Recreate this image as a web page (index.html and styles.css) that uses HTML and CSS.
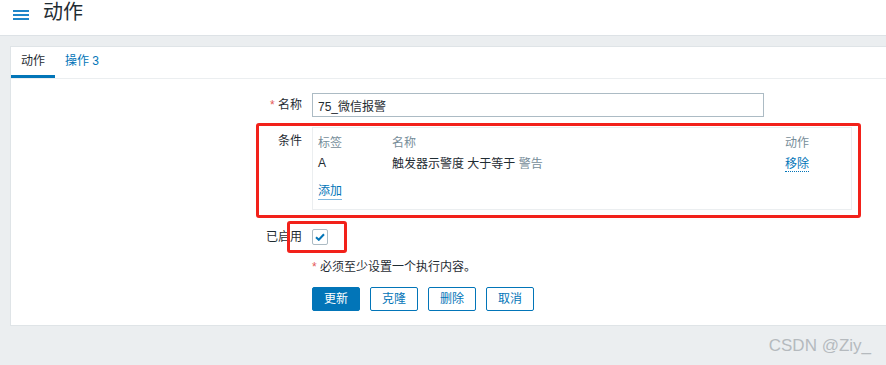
FILE: index.html
```html
<!DOCTYPE html>
<html lang="zh">
<head>
<meta charset="utf-8">
<title>动作</title>
<link rel="stylesheet" href="styles.css">
</head>
<body>
<header class="page-header">
  <svg class="menu-icon" width="16" height="12" viewBox="0 0 16 12"><rect x="0" y="1" width="16" height="2" fill="#1f86c9"/><rect x="0" y="5" width="16" height="2" fill="#1f86c9"/><rect x="0" y="9" width="16" height="2" fill="#1f86c9"/></svg>
  <h1 class="title">动作</h1>
</header>

<main class="panel">
  <nav class="tabs">
    <span class="tab active">动作</span>
    <span class="tab link">操作 3</span>
  </nav>

  <form class="form">
    <div class="row">
      <label class="label"><span class="req">*</span> 名称</label>
      <div class="field"><input class="text-input" type="text" value="75_微信报警"></div>
    </div>

    <div class="row row-cond">
      <label class="label label-cond">条件</label>
      <div class="field">
        <div class="cond-box">
          <table class="cond-table">
            <colgroup><col class="c1"><col><col class="c3"></colgroup>
            <thead>
              <tr><th>标签</th><th>名称</th><th>动作</th></tr>
            </thead>
            <tbody>
              <tr><td>A</td><td>触发器示警度 大于等于 <span class="muted">警告</span></td><td><span class="link dotted">移除</span></td></tr>
            </tbody>
          </table>
          <div class="add-row"><span class="link solid">添加</span></div>
        </div>
      </div>
    </div>

    <div class="row row-check">
      <label class="label">已启用</label>
      <div class="field"><span class="checkbox"><svg width="10" height="8" viewBox="0 0 10 8"><path d="M1 4.2 L3.8 6.8 L9 1.2" fill="none" stroke="#0275b8" stroke-width="2"/></svg></span></div>
    </div>

    <div class="row row-note">
      <div class="label"></div>
      <div class="field note"><span class="req">*</span> 必须至少设置一个执行内容。</div>
    </div>

    <div class="row row-buttons">
      <div class="label"></div>
      <div class="field buttons">
        <button type="button" class="btn primary">更新</button>
        <button type="button" class="btn">克隆</button>
        <button type="button" class="btn">删除</button>
        <button type="button" class="btn">取消</button>
      </div>
    </div>
  </form>
</main>

<footer class="watermark">CSDN @Ziy_</footer>

<div class="mark mark-cond"></div>
<div class="mark mark-check"></div>
</body>
</html>
```

FILE: styles.css
```css
* { box-sizing: border-box; }
html, body { margin: 0; padding: 0; }
body {
  background: #ebeef0;
  font-family: "Liberation Sans", "Noto Sans CJK SC", sans-serif;
  font-size: 12px;
  color: #1f2c33;
  width: 886px;
  height: 365px;
  overflow: hidden;
  position: relative;
}
.page-header {
  height: 36px;
  background: #fff;
  border-bottom: 1px solid #dde2e6;
  display: flex;
  align-items: center;
  padding-left: 13px;
}
.menu-icon { display: block; margin-top: -6px; }
.title {
  margin: 0 0 0 14px;
  font-size: 20px;
  font-weight: normal;
  line-height: 24px;
  margin-top: -11px;
  color: #1f2c33;
}
.panel {
  margin: 10px 0 0 10px;
  background: #fff;
  border: 1px solid #dfe4e7;
  border-right: none;
  height: 280px;
}
.tabs {
  display: flex;
  height: 32px;
  border-bottom: 1px solid #ebeef0;
}
.tab {
  height: 31px;
  line-height: 28px;
  padding: 0 10px;
  border-bottom: 3px solid transparent;
}
.tab.active { border-bottom-color: #0275b8; }
.link { color: #0275b8; }
.form { padding-top: 14px; }
.row { display: flex; }
.label {
  width: 301px;
  flex: none;
  text-align: right;
  padding-right: 10px;
  line-height: 24px;
}
.req { color: #e45959; }
.field { flex: none; }
.text-input {
  display: block;
  width: 452px;
  height: 24px;
  margin: 0;
  border: 1px solid #acbbc4;
  padding: 0 5px;
  font: inherit;
  color: #1f2c33;
  background: #fff;
  outline: none;
}
.row-cond { margin-top: 10px; }
.label-cond { line-height: 24px; padding-top: 2px; }
.cond-box {
  width: 540px;
  height: 83px;
  border: 1px solid #ebeef0;
  padding: 3px 5px 0 5px;
}
.cond-table {
  width: 100%;
  border-collapse: collapse;
  table-layout: fixed;
}
.cond-table col.c1 { width: 74px; }
.cond-table col.c3 { width: 61px; }
.cond-table th, .cond-table td {
  padding: 0;
  height: 21px;
  text-align: left;
  font-weight: normal;
  vertical-align: middle;
}
.cond-table th { color: #768d99; }
.muted { color: #768d99; }
.dotted { border-bottom: 1px dotted #0275b8; }
.add-row { margin-top: 7px; line-height: 22px; }
.solid { border-bottom: 1px solid #7db8e0; padding-bottom: 1px; }
.row-check { margin-top: 15px; height: 24px; align-items: center; }
.checkbox {
  display: flex;
  align-items: center;
  justify-content: center;
  width: 16px;
  height: 16px;
  border: 1px solid #acbbc4;
  border-radius: 2px;
  background: #fff;
}
.row-note { margin-top: 6px; }
.note { line-height: 24px; }
.row-buttons { margin-top: 8px; }
.buttons { display: flex; gap: 10px; }
.btn {
  height: 24px;
  margin: 0;
  padding: 0 11px;
  font: inherit;
  line-height: 22px;
  border: 1px solid #0275b8;
  border-radius: 2px;
  background: #fff;
  color: #0275b8;
}
.btn.primary { background: #0275b8; color: #fff; }
.watermark {
  text-align: right;
  padding-right: 15px;
  margin-top: 9px;
  font-size: 17px;
  color: #b5babe;
  line-height: 22px;
}
.mark {
  position: absolute;
  border: 3px solid #f2211a;
  border-radius: 3px;
}
.mark-cond { left: 256px; top: 123px; width: 605px; height: 95px; }
.mark-check { left: 287px; top: 221px; width: 60px; height: 32px; }
```
